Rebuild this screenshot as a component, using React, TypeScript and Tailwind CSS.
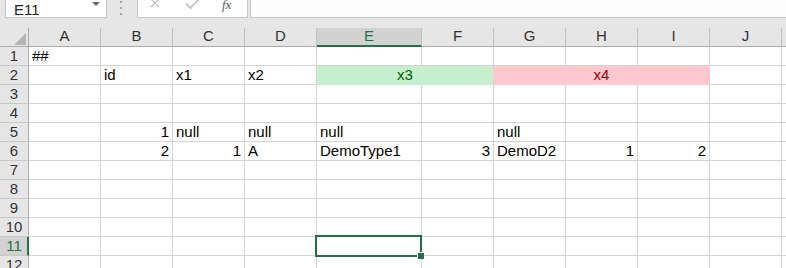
import clsx from "clsx";

type Col = { key: string; w: string };

const cols: Col[] = [
  { key: "A", w: "w-[72px]" },
  { key: "B", w: "w-[72px]" },
  { key: "C", w: "w-[72px]" },
  { key: "D", w: "w-[72px]" },
  { key: "E", w: "w-[105px]" },
  { key: "F", w: "w-[72px]" },
  { key: "G", w: "w-[72px]" },
  { key: "H", w: "w-[72px]" },
  { key: "I", w: "w-[72px]" },
  { key: "J", w: "w-[72px]" },
  { key: "", w: "w-[72px]" },
];

type Val = { t: string; right?: boolean };

const data: Record<number, Record<string, Val>> = {
  1: { A: { t: "##" } },
  2: { B: { t: "id" }, C: { t: "x1" }, D: { t: "x2" } },
  5: {
    B: { t: "1", right: true },
    C: { t: "null" },
    D: { t: "null" },
    E: { t: "null" },
    G: { t: "null" },
  },
  6: {
    B: { t: "2", right: true },
    C: { t: "1", right: true },
    D: { t: "A" },
    E: { t: "DemoType1" },
    F: { t: "3", right: true },
    G: { t: "DemoD2" },
    H: { t: "1", right: true },
    I: { t: "2", right: true },
  },
};

function Toolbar() {
  return (
    <div className="flex h-[28px] items-start bg-[#e6e6e6]">
      <div className="relative ml-[5px] flex h-[18px] w-[102px] items-end border-x border-b border-[#c6c6c6] bg-white pl-[8px]">
        <span className="text-[15px] leading-[14px] text-[#222]">E11</span>
        <span className="absolute right-[6px] top-[2px] h-0 w-0 border-x-[4px] border-t-[4px] border-x-transparent border-t-[#6a6a6a]" />
      </div>
      <div className="ml-[13px] flex flex-col gap-[4px] pt-[1px]">
        <span className="h-[2px] w-[2px] bg-[#a8a8a8]" />
        <span className="h-[2px] w-[2px] bg-[#a8a8a8]" />
        <span className="h-[2px] w-[2px] bg-[#a8a8a8]" />
      </div>
      <div className="ml-[15px] flex h-[18px] w-[111px] items-start border-x border-b border-[#c6c6c6] bg-white">
        <svg width="14" height="10" viewBox="0 0 14 10" className="ml-[11px] mt-[-1px]">
          <path d="M2 0 L10 8 M10 0 L2 8" stroke="#c4c4c4" strokeWidth="1.4" fill="none" />
        </svg>
        <svg width="16" height="11" viewBox="0 0 16 11" className="ml-[22px] mt-[-1px]">
          <path d="M1 4.5 L5.5 9 L14 0" stroke="#c8c8c8" strokeWidth="2" fill="none" />
        </svg>
        <span className="ml-[21px] mt-[-1px] font-['Liberation_Serif',serif] text-[13px] italic leading-[11px] text-[#555]">
          fx
        </span>
      </div>
      <div className="ml-[2px] h-[18px] flex-1 border-l border-b border-[#c6c6c6] bg-[#fdfdfd]" />
    </div>
  );
}

function HeaderRow() {
  return (
    <div className="flex h-[19px]">
      <div className="flex h-[19px] w-[29px] shrink-0 items-end justify-end border-r border-b border-[#ababab] bg-[#e6e6e6] pb-[1px] pr-[2px]">
        <svg width="12" height="12" viewBox="0 0 12 12">
          <path d="M12 0 L12 12 L0 12 Z" fill="#b4b4b4" />
        </svg>
      </div>
      {cols.map((c, i) => {
        const sel = c.key === "E";
        return (
          <div
            key={i}
            className={clsx(
              "flex h-[19px] shrink-0 items-end justify-center border-r text-[15px] leading-[16px]",
              c.w,
              sel
                ? "border-b-2 border-r-[#bdbdbd] border-b-[#217346] bg-[#d2d2d2] pb-[1px] text-[#217346]"
                : "border-b border-r-[#c2c2c2] border-b-[#ababab] bg-[#e6e6e6] pb-[2px] text-[#333]"
            )}
          >
            {c.key}
          </div>
        );
      })}
    </div>
  );
}

function Row({ n }: { n: number }) {
  const vals = data[n] ?? {};
  const sel = n === 11;
  return (
    <div className="flex h-[19px]">
      <div
        className={clsx(
          "flex h-[19px] w-[29px] shrink-0 items-end justify-center border-b border-b-[#c8c8c8] text-[15px] leading-[16px] pb-[1px]",
          sel
            ? "border-r-2 border-r-[#217346] bg-[#d2d2d2] pl-[1px] text-[#217346]"
            : "border-r border-r-[#b0b0b0] bg-[#e6e6e6] text-[#333]"
        )}
      >
        {n}
      </div>
      {cols.map((c, i) => {
        if (n === 2 && (c.key === "F" || c.key === "H" || c.key === "I")) return null;
        if (n === 2 && c.key === "E") {
          return (
            <div
              key={i}
              className="flex h-[19px] w-[177px] shrink-0 items-end justify-center border-r border-b border-[#c6efce] bg-[#c6efce] pb-[1px] text-[15px] leading-[16px] text-[#006100] shadow-[-1px_-1px_0_#c6efce]"
            >
              x3
            </div>
          );
        }
        if (n === 2 && c.key === "G") {
          return (
            <div
              key={i}
              className="flex h-[19px] w-[216px] shrink-0 items-end justify-center border-r border-b border-[#ffc7ce] bg-[#ffc7ce] pb-[1px] text-[15px] leading-[16px] text-[#9c0006] shadow-[-1px_-1px_0_#ffc7ce]"
            >
              x4
            </div>
          );
        }
        const v = vals[c.key];
        return (
          <div
            key={i}
            className={clsx(
              "relative flex h-[19px] shrink-0 items-end whitespace-nowrap border-r border-b border-[#d4d4d4] px-[3px] pb-[1px] text-[15px] leading-[16px] text-black",
              c.w,
              v?.right && "justify-end"
            )}
          >
            {v?.t}
            {sel && c.key === "E" && (
              <div className="absolute left-[-2px] top-[-2px] z-10 h-[22px] w-[107px] border-2 border-[#217346]">
                <span className="absolute bottom-[-4px] right-[-4px] h-[7px] w-[7px] border-l border-t border-white bg-[#217346]" />
              </div>
            )}
          </div>
        );
      })}
    </div>
  );
}

export default function App() {
  return (
    <div className="h-[268px] w-[786px] overflow-hidden bg-white font-['Liberation_Sans',Arial,sans-serif]">
      <Toolbar />
      <HeaderRow />
      {[1, 2, 3, 4, 5, 6, 7, 8, 9, 10, 11, 12].map((n) => (
        <Row key={n} n={n} />
      ))}
    </div>
  );
}
